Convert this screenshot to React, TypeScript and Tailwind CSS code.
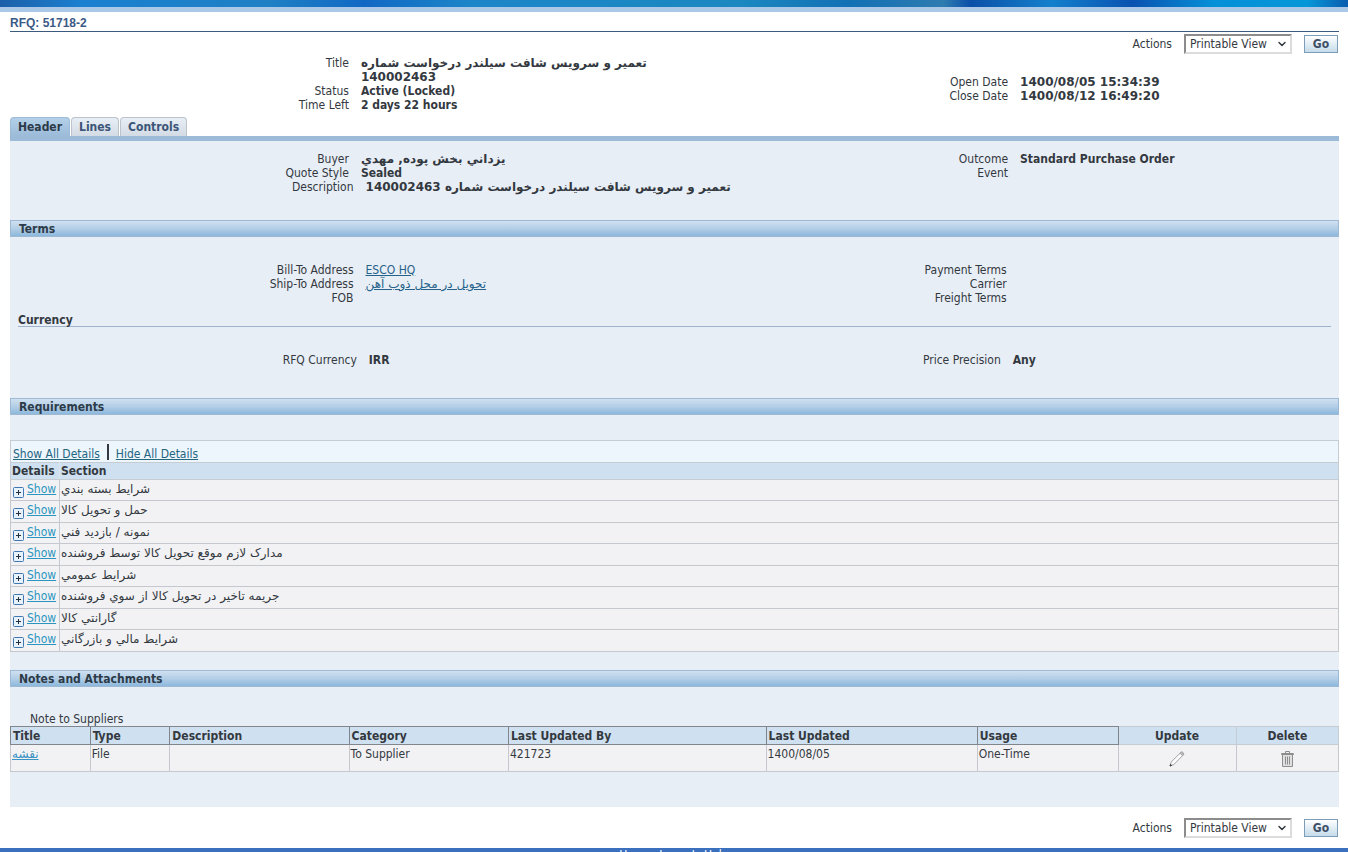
import { useState, type ReactNode } from "react"
import { ChevronDown } from "lucide-react"

const TITLE = "تعمير و سرويس شافت سيلندر درخواست شماره"

const sections = [
  "شرايط بسته بندي",
  "حمل و تحويل كالا",
  "نمونه / بازديد فني",
  "مدارک لازم موقع تحويل كالا توسط فروشنده",
  "شرايط عمومي",
  "جريمه تاخير در تحويل كالا از سوي فروشنده",
  "گارانتي كالا",
  "شرايط مالي و بازرگاني",
]

const columns = [
  { name: "Title", width: "w-[6%]" },
  { name: "Type", width: "w-[6%]" },
  { name: "Description", width: "w-[13.5%]" },
  { name: "Category", width: "w-[12%]" },
  { name: "Last Updated By", width: "w-[19.4%]" },
  { name: "Last Updated", width: "w-[15.9%]" },
  { name: "Usage", width: "w-[10.6%]" },
]

type Item = { label: string; value?: ReactNode }

function Fields({ items, labelWidth }: { items: Item[]; labelWidth: string }) {
  return (
    <dl>
      {items.map(item => (
        <div key={item.label} className="flex gap-3">
          <dt className={`${labelWidth} shrink-0 text-right`}>{item.label}</dt>
          <dd className="font-bold whitespace-nowrap">{item.value}</dd>
        </div>
      ))}
    </dl>
  )
}

// Persian text and long numbers use the full-width face
function Wide({ children }: { children: ReactNode }) {
  return <span className="font-['DejaVu_Sans',sans-serif]">{children}</span>
}

function SectionBar({ children }: { children: ReactNode }) {
  return (
    <h2 className="h-[17px] border border-[#9db9d4] bg-linear-to-b from-[#cfe0f1] via-[#b3cee6] to-[#8db8dc] pl-2 font-bold leading-[17px] text-[#2d3b49]">
      {children}
    </h2>
  )
}

function Actions({ id }: { id: string }) {
  return (
    <div className="flex h-5 items-center justify-end gap-3 pr-px">
      <label htmlFor={id}>Actions</label>
      <div className="relative">
        <select
          id={id}
          className="block h-5 w-[108px] appearance-none border-2 border-t-[#8c8c8c] border-l-[#8c8c8c] border-r-[#dcdcdc] border-b-[#dcdcdc] bg-white pl-1 leading-4"
        >
          <option>Printable View</option>
        </select>
        <ChevronDown size={12} strokeWidth={3} className="pointer-events-none absolute top-1 right-1" />
      </div>
      <button className="h-[18px] w-[34px] border border-[#7d9db8] bg-linear-to-b from-white to-[#c5dcea] font-bold leading-4 text-[#3f4f66]">
        Go
      </button>
    </div>
  )
}

export default function App() {
  const [tab, setTab] = useState("Header")

  return (
    <div className="h-screen overflow-hidden bg-white font-['DejaVu_Sans_Condensed','DejaVu_Sans',sans-serif] text-[12px] leading-[14px] text-[#33393f]">
      <div className="h-[7px] bg-[linear-gradient(90deg,#1c5fa8,#1a80d0_6%,#1f80c4_20%,#1168c4_27%,#1c86c8_35%,#1b88c0_55%,#1270b4_63%,#2f7cb0_70%,#0a4fa8_72%,#1480cc_78%,#0a52b0_84%,#0590d8_90%,#0597d8_97%,#0a5cae)]" />
      <div className="h-[5px] bg-[#abc8e6]" />

      <main className="pr-[9px] pl-[10px]">
        <h1 className="h-5 border-b border-[#3c5a7d] pt-1 font-['Liberation_Sans',sans-serif] font-bold text-[#3c5a86]">
          RFQ: 51718-2
        </h1>
        <div className="pt-[2px]">
          <Actions id="actions-top" />
        </div>

        <div className="flex h-[63px]">
          <div className="w-1/2 pt-[2px]">
            <Fields
              labelWidth="w-[51%]"
              items={[
                { label: "Title", value: <Wide>{TITLE}<br />140002463</Wide> },
                { label: "Status", value: "Active (Locked)" },
                { label: "Time Left", value: "2 days 22 hours" },
              ]}
            />
          </div>
          <div className="w-1/2 pt-[21px]">
            <Fields
              labelWidth="w-[50.2%]"
              items={[
                { label: "Open Date", value: <Wide>1400/08/05 15:34:39</Wide> },
                { label: "Close Date", value: <Wide>1400/08/12 16:49:20</Wide> },
              ]}
            />
          </div>
        </div>

        {/* Tabs */}
        <nav className="flex gap-px">
          {["Header", "Lines", "Controls"].map(name => (
            <button
              key={name}
              onClick={() => setTab(name)}
              className={`h-[19px] rounded-t border border-b-0 px-[7px] font-bold ${
                tab === name
                  ? "border-[#9dbcd8] bg-linear-to-b from-[#b4d0e8] to-[#9bbbd9] text-[#2d3b49]"
                  : "border-[#bcc3ca] bg-linear-to-b from-[#e8eef5] to-[#d3dbe5] text-[#3c5577]"
              }`}
            >
              {name}
            </button>
          ))}
        </nav>

        <div className="border-t-[5px] border-[#9bbbd9] bg-[#e8eef6] pb-[35px]">
          <div className="flex pt-[11px] pb-[26px]">
            <div className="w-1/2">
              <Fields
                labelWidth="w-[51%]"
                items={[
                  { label: "Buyer", value: <Wide>يزداني بخش پوده, مهدي</Wide> },
                  { label: "Quote Style", value: "Sealed" },
                ]}
              />
              <Fields
                labelWidth="w-[51.7%]"
                items={[{ label: "Description", value: <Wide>{TITLE} 140002463</Wide> }]}
              />
            </div>
            <div className="w-1/2">
              <Fields
                labelWidth="w-[50.2%]"
                items={[{ label: "Outcome", value: "Standard Purchase Order" }, { label: "Event" }]}
              />
            </div>
          </div>

          <SectionBar>Terms</SectionBar>
          <div className="flex pt-[26px] pb-2">
            <div className="w-1/2">
              <Fields
                labelWidth="w-[51.7%]"
                items={[
                  { label: "Bill-To Address", value: <a href="#" className="font-normal text-[#256289] underline">ESCO HQ</a> },
                  {
                    label: "Ship-To Address",
                    value: <a href="#" className="font-normal text-[#256289] underline"><Wide>تحويل در محل ذوب آهن</Wide></a>,
                  },
                  { label: "FOB" },
                ]}
              />
            </div>
            <div className="w-1/2">
              <Fields
                labelWidth="w-[50%]"
                items={[{ label: "Payment Terms" }, { label: "Carrier" }, { label: "Freight Terms" }]}
              />
            </div>
          </div>
          <h3 className="mx-2 h-[14px] border-b border-[#9db4cc] font-bold leading-[14px]">Currency</h3>
          <div className="flex pt-[26px] pb-[31px]">
            <div className="w-1/2">
              <Fields labelWidth="w-[52.2%]" items={[{ label: "RFQ Currency", value: "IRR" }]} />
            </div>
            <div className="w-1/2">
              <Fields labelWidth="w-[49.1%]" items={[{ label: "Price Precision", value: "Any" }]} />
            </div>
          </div>

          <SectionBar>Requirements</SectionBar>
          <div className="mt-[25px] flex h-[22px] items-center gap-[7px] border border-b-0 border-[#c5ccd4] bg-[#edf5fd] px-[2px] pt-1 text-[#24657f]">
            <a href="#" className="underline">Show All Details</a>
            <span className="mb-1 h-4 w-[2px] bg-[#33393f]" />
            <a href="#" className="underline">Hide All Details</a>
          </div>
          <table className="w-full border-collapse text-left">
            <thead>
              <tr className="h-[17px] bg-[#cfe0f0]">
                <th className="w-[49px] border border-r-[#dbe6f0] border-[#c5ccd4] px-px py-0">Details</th>
                <th className="border border-[#c5ccd4] px-px py-0">Section</th>
              </tr>
            </thead>
            <tbody>
              {sections.map(s => (
                <tr key={s} className="h-[21px] bg-[#f2f2f4] align-top even:h-[22px]">
                  <td className="border border-[#c5c8ce] py-0 pl-[2px]">
                    <a href="#" className="flex items-start gap-[3px] whitespace-nowrap text-[#2b95bf]">
                      <svg width="11" height="11" viewBox="0 0 11 11" className="mt-[7px] shrink-0">
                        <rect x="0.5" y="0.5" width="10" height="10" rx="1" fill="#e8f2fb" stroke="#3f77b5" />
                        <path d="M5.5 3v5M3 5.5h5" stroke="#23303f" />
                      </svg>
                      <span className="pt-[2px] underline">Show</span>
                    </a>
                  </td>
                  <td className="border border-[#c5c8ce] px-px pt-[2px] pb-0"><Wide>{s}</Wide></td>
                </tr>
              ))}
            </tbody>
          </table>

          <div className="pt-[18px]">
            <SectionBar>Notes and Attachments</SectionBar>
          </div>
          <p className="pt-[26px] pl-5 leading-[13px]">Note to Suppliers</p>
          <table className="w-full table-fixed border-collapse text-left">
            <thead>
              <tr className="h-[18px] bg-[#cfe0f0]">
                {columns.map(c => (
                  <th key={c.name} className={`${c.width} border border-[#80868c] px-[2px] py-0`}>{c.name}</th>
                ))}
                <th className="w-[8.9%] border border-[#c5ccd4] p-0 text-center">Update</th>
                <th className="border border-[#c5ccd4] p-0 text-center">Delete</th>
              </tr>
            </thead>
            <tbody>
              <tr className="h-[27px] bg-[#f2f2f4] align-top *:border *:border-[#c5c8ce] *:px-px *:py-[2px]">
                <td><a href="#" className="text-[#3b93c4] underline"><Wide>نقشه</Wide></a></td>
                <td>File</td>
                <td></td>
                <td>To Supplier</td>
                <td>421723</td>
                <td>1400/08/05</td>
                <td>One-Time</td>
                <td>
                  <button aria-label="Update" className="mx-auto mt-1 block">
                    <svg width="16" height="16" viewBox="0 0 16 16" fill="#fcfcfc" stroke="#a2a2a2">
                      <path d="M1 15l1.2-4L12 1.2q2 .2 2.6 2.4L5 13.4z" />
                      <path d="M11 2.200l1.500-1.500q2 .5 2.300 2.500l-1.300 1.500z" fill="#bdbdbd" />
                      <path d="M1 15l.6-1.600 1 1z" fill="#333" stroke="#444" />
                    </svg>
                  </button>
                </td>
                <td>
                  <button aria-label="Delete" className="mx-auto mt-1 block">
                    <svg width="13" height="16" viewBox="0 0 13 16" fill="none" stroke="#8d8d8d">
                      <path d="M1 4h11l-1 11.500H2z" fill="#e0e0e0" stroke="none" />
                      <path d="M.5 2.500h12v1H.5zM4.500 2.500v-2h4v2M1.500 4v11.500h10V4M4.500 5.500v8M6.500 5.500v8M8.500 5.500v8" />
                    </svg>
                  </button>
                </td>
              </tr>
            </tbody>
          </table>
        </div>

        <div className="pt-[11px] pb-[10px]">
          <Actions id="actions-bottom" />
        </div>
      </main>

      <footer className="flex h-8 justify-center gap-2 bg-[#3a70bd] text-white">
        <a href="#">Home</a>
        <a href="#">Logout</a>
        <a href="#">Help</a>
      </footer>
    </div>
  )
}
